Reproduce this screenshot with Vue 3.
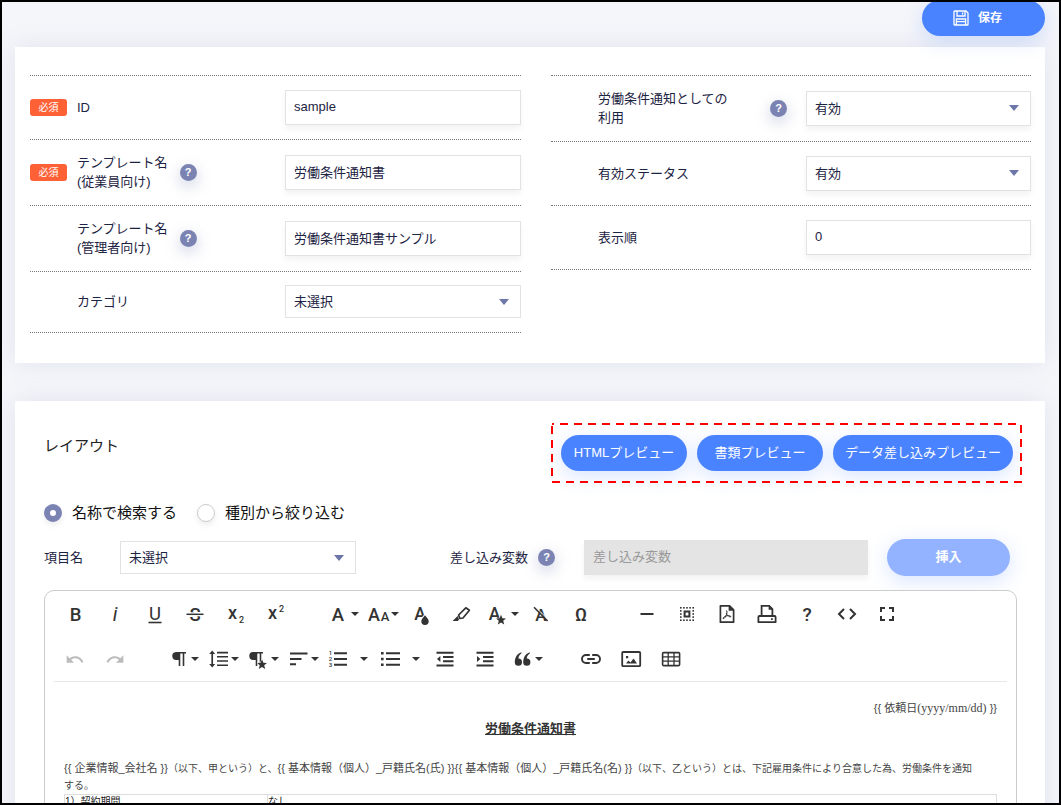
<script setup>
import { ref } from 'vue'

const templateId = ref('sample')
const employeeName = ref('労働条件通知書')
const adminName = ref('労働条件通知書サンプル')
const order = ref('0')
const searchMode = ref('name')

const letter = (ch, x, y, size, extra = '', weight = 500) =>
  `<text x="${x}" y="${y}" font-size="${size}" font-weight="${weight}" font-family="Roboto, sans-serif" text-anchor="middle" fill="currentColor" ${extra}>${ch}</text>`
const star = (x, y) =>
  `<path transform="translate(${x} ${y})" d="M0-5.2 1.4-1.7 5-1.5 2.2.8 3.2 4.4 0 2.4-3.2 4.4-2.2.8-5-1.5-1.4-1.7Z" fill="currentColor" stroke="#fff" stroke-width="1" paint-order="stroke"/>`
const line = (d, w = 2) => `<path d="${d}" fill="none" stroke="currentColor" stroke-width="${w}"/>`
const fill = (d) => `<path d="${d}" fill="currentColor"/>`
const pilcrow = (dx) =>
  `<path transform="translate(${dx} 0)" d="M9 5H19V6.6H17.3V19H15.7V6.6H13.3V19H11.7V13H9.6A4 4 0 0 1 9 5Z" fill="currentColor"/>`
const arc =
  'M12.5 8c-2.65 0-5.05.99-6.9 2.6L2 7v9h9l-3.62-3.62c1.39-1.16 3.16-1.88 5.12-1.88 3.54 0 6.55 2.31 7.6 5.5l2.37-.78C21.08 11.03 17.15 8 12.5 8z'

let dots = ''
for (let i = 0; i < 5; i++) {
  for (let j = 0; j < 5; j++) {
    if (i % 4 === 0 || j % 4 === 0) {
      dots += `<rect x="${5 + i * 3.1}" y="${5 + j * 3.1}" width="1.6" height="1.6" fill="currentColor"/>`
    }
  }
}

const rows = [
  [
    [
      { name: '太字', svg: letter('B', 12.5, 18.8, 18.5) },
      { name: '斜体', svg: letter('i', 12, 19, 20, 'font-style="italic"', 400) },
      { name: '下線', svg: letter('U', 12, 17.5, 18.5, '', 400) + line('M5.5 20.5H18.5', 1.6) },
      {
        name: '取り消し線',
        svg: letter('S', 12, 18.6, 18.5) + '<path d="M3 12.3H21" stroke="#fff" stroke-width="4"/>' + line('M3.5 12.3H20.5', 1.5),
      },
      { name: '下付き文字', svg: letter('x', 9.5, 17, 18) + letter('2', 18.5, 20.5, 9) },
      { name: '上付き文字', svg: letter('x', 9.5, 17, 18) + letter('2', 18.5, 10, 9) },
    ],
    [
      { name: 'フォント', caret: true, svg: letter('A', 11, 18.6, 18.5) },
      { name: 'フォントサイズ', caret: true, svg: letter('A', 7, 18.6, 18) + letter('A', 18, 18.6, 13) },
      {
        name: '文字色',
        svg:
          letter('A', 11, 17.6, 17.5) +
          '<path d="M16 13.2C18.5 16 19.7 17.5 19.7 19.2A3.7 3.7 0 0 1 12.3 19.2C12.3 17.5 13.5 16 16 13.2Z" fill="currentColor" stroke="#fff" stroke-width="2" paint-order="stroke"/>',
      },
      {
        name: '背景色',
        svg:
          '<path d="M9.6 13 16.8 5.8 20.4 8.2 14 16 10.8 16.4Z" fill="none" stroke="currentColor" stroke-width="1.7" stroke-linejoin="round"/>' +
          fill('M3.6 19 8.6 14 10 17.4 8.8 19Z'),
      },
      { name: '文字スタイル', caret: true, svg: letter('A', 7.5, 17.6, 17.5) + star(14, 18) },
      {
        name: '書式クリア',
        svg: letter('A', 12, 18.6, 17) + '<path d="M5.5 4 19 17.5" stroke="#fff" stroke-width="1"/>' + line('M5 5.2 18.6 19', 1.6),
      },
      { name: '特殊文字', svg: letter('Ω', 12, 18.6, 18) },
    ],
    [
      { name: '水平線', svg: line('M5.5 12H18.5', 2) },
      { name: 'すべて選択', svg: dots + line('M9.6 9.6H14.4V14.4H9.6Z', 2) },
      {
        name: 'PDF',
        svg:
          '<path d="M6.4 3.8H14.6L18.6 7.8V20.2H5.4V3.8Z" fill="none" stroke="currentColor" stroke-width="1.7" stroke-linejoin="round"/>' +
          fill('M13.6 3.2V8.8H19.2Z') +
          line('M11 8.6C12.6 8.6 12 11 11.4 12.6 10.6 14.6 9.4 17 8.2 16.6 7.4 16 9.6 14.2 12 13.8 14 13.4 16 13.8 15.8 14.8 15.2 15.6 12 13.8 11.2 11', 1),
      },
      {
        name: '印刷',
        svg:
          '<path d="M6.6 14V3.8H14.2L17.4 7V14" fill="none" stroke="currentColor" stroke-width="1.8"/>' +
          fill('M13.6 3V7.8H18.2Z') +
          '<path d="M3.4 20.2V15Q3.4 14 4.4 14H19.6Q20.6 14 20.6 15V20.2Z" fill="none" stroke="currentColor" stroke-width="1.8" stroke-linejoin="round"/>' +
          fill('M16 16.2H17.8V18H16Z'),
      },
      { name: 'ヘルプ', svg: letter('?', 12, 19, 19) },
      { name: 'コード表示', svg: line('M9 7 4 12 9 17M15 7 20 12 15 17', 2) },
      { name: '全画面', svg: line('M10 6H6V10M14 6H18V10M10 18H6V14M14 18H18V14', 2) },
    ],
  ],
  [
    [
      { name: '元に戻す', muted: true, svg: `<path transform="translate(2 2.6) scale(.82)" d="${arc}" fill="currentColor"/>` },
      { name: 'やり直す', muted: true, svg: `<path transform="translate(22 2.6) scale(-.82 .82)" d="${arc}" fill="currentColor"/>` },
    ],
    [
      { name: '段落書式', caret: true, svg: pilcrow(0) },
      {
        name: '行の高さ',
        caret: true,
        svg: line('M5.2 6V18', 1.7) + fill('M5.2 3.6 8.2 7H2.2ZM5.2 20.4 8.2 17H2.2Z') + line('M10 5.6H21M10 9.8H21M10 14H21M10 18.2H21', 1.6),
      },
      { name: '段落スタイル', caret: true, svg: pilcrow(-3) + star(15, 17.5) },
      { name: '配置', caret: true, svg: line('M3 6.5H20.5M3 12H14.5M3 17.3H9', 2) },
      {
        name: '番号付きリスト',
        split: true,
        svg: line('M8 6.2H21M8 12H21M8 17.8H21', 2) + letter('1', 4.5, 8.2, 6) + letter('2', 4.5, 13.8, 6) + letter('3', 4.5, 19.6, 6),
      },
      {
        name: '箇条書き',
        split: true,
        svg: line('M8 6.2H22M8 12H22M8 17.8H22', 2) + line('M3 6.2H5.6M3 12H5.6M3 17.8H5.6', 2.4),
      },
      { name: 'インデント減', svg: line('M3.5 5.8H20.5M10 10H20.5M10 14.2H20.5M3.5 18.4H20.5', 2) + fill('M4 12 7.4 9V15Z') },
      { name: 'インデント増', svg: line('M3.5 5.8H20.5M10 10H20.5M10 14.2H20.5M3.5 18.4H20.5', 2) + fill('M7.4 12 4 9V15Z') },
      {
        name: '引用',
        caret: true,
        svg: fill(
          'M10.4 5.2V6.6C8.4 7.8 7.4 9.6 7.4 11.6A3.6 3.6 0 1 1 3.8 15.2C3.8 10.6 6 6.6 10.4 5.2ZM18.8 5.2V6.6C16.8 7.8 15.8 9.6 15.8 11.6A3.6 3.6 0 1 1 12.2 15.2C12.2 10.6 14.4 6.6 18.8 5.2Z'
        ),
      },
    ],
    [
      {
        name: 'リンク',
        svg: '<path d="M10.8 8H7A4 4 0 0 0 7 16H10.8M13.2 8H17A4 4 0 0 1 17 16H13.2M8.2 12H15.8" fill="none" stroke="currentColor" stroke-width="1.9"/>',
      },
      {
        name: '画像',
        svg:
          '<rect x="3.2" y="5" width="18" height="14.2" rx="1" fill="none" stroke="currentColor" stroke-width="1.8"/>' +
          fill('M7 9H9.2V11.2H7ZM7 16.4 9.4 13.4 11.4 15.4 14.6 11.4 18 16.4Z'),
      },
      {
        name: '表',
        svg:
          '<rect x="3.6" y="5.6" width="17" height="13" rx="1" fill="none" stroke="currentColor" stroke-width="1.6"/>' +
          line('M3.6 9.8H20.6M3.6 14.2H20.6M9.2 5.6V18.6M15 5.6V18.6', 1.3),
      },
    ],
  ],
]
</script>

<template>
  <div class="frame">
    <header class="topbar">
      <button type="button" class="pill save">
        <svg viewBox="0 0 16 16" width="16" height="16" fill="none" stroke="currentColor" stroke-width="1.3">
          <path d="M1 1.6Q1 1 1.6 1H13L15 3V14.4Q15 15 14.4 15H1.6Q1 15 1 14.4Z" />
          <path d="M4 1V6H12V1M9.6 2.4V4.6M3.4 15V9H12.6V15M3.4 11.6H12.6" />
        </svg>
        <span>保存</span>
      </button>
    </header>

    <main>
      <section class="card settings">
        <div class="column">
          <div class="row">
            <span class="badge">必須</span>
            <div class="label-cell"><label for="tpl-id">ID</label></div>
            <input id="tpl-id" v-model="templateId" class="field" type="text" />
          </div>
          <div class="row">
            <span class="badge">必須</span>
            <div class="label-cell">
              <label for="tpl-emp">テンプレート名<br />(従業員向け)</label>
              <button type="button" class="help">?</button>
            </div>
            <input id="tpl-emp" v-model="employeeName" class="field" type="text" />
          </div>
          <div class="row">
            <div class="label-cell">
              <label for="tpl-admin">テンプレート名<br />(管理者向け)</label>
              <button type="button" class="help">?</button>
            </div>
            <input id="tpl-admin" v-model="adminName" class="field" type="text" />
          </div>
          <div class="row compact">
            <div class="label-cell"><label for="tpl-cat">カテゴリ</label></div>
            <div class="select flat">
              <select id="tpl-cat" class="field"><option>未選択</option></select>
              <svg viewBox="0 0 10 6" width="10" height="6"><path d="M0 0H10L5 6Z" /></svg>
            </div>
          </div>
        </div>

        <div class="column">
          <div class="row">
            <div class="label-cell spread">
              <label for="tpl-use">労働条件通知としての利用</label>
              <button type="button" class="help">?</button>
            </div>
            <div class="select">
              <select id="tpl-use" class="field"><option>有効</option></select>
              <svg viewBox="0 0 10 6" width="10" height="6"><path d="M0 0H10L5 6Z" /></svg>
            </div>
          </div>
          <div class="row">
            <div class="label-cell"><label for="tpl-status">有効ステータス</label></div>
            <div class="select">
              <select id="tpl-status" class="field"><option>有効</option></select>
              <svg viewBox="0 0 10 6" width="10" height="6"><path d="M0 0H10L5 6Z" /></svg>
            </div>
          </div>
          <div class="row">
            <div class="label-cell"><label for="tpl-order">表示順</label></div>
            <input id="tpl-order" v-model="order" class="field" type="text" />
          </div>
        </div>
      </section>

      <section class="card layout">
        <div class="layout-head">
          <h2>レイアウト</h2>
          <div class="previews">
            <button type="button" class="pill">HTMLプレビュー</button>
            <button type="button" class="pill">書類プレビュー</button>
            <button type="button" class="pill wide">データ差し込みプレビュー</button>
            <svg class="outline" aria-hidden="true"><rect x="1" y="1" /></svg>
          </div>
        </div>

        <div class="modes">
          <label><input v-model="searchMode" type="radio" name="mode" value="name" />名称で検索する</label>
          <label><input v-model="searchMode" type="radio" name="mode" value="kind" />種別から絞り込む</label>
        </div>

        <div class="insert">
          <label class="item-label" for="item">項目名</label>
          <div class="select flat item-select">
            <select id="item" class="field"><option>未選択</option></select>
            <svg viewBox="0 0 10 6" width="10" height="6"><path d="M0 0H10L5 6Z" /></svg>
          </div>
          <div class="var-label">
            <label for="variable">差し込み変数</label>
            <button type="button" class="help">?</button>
          </div>
          <input id="variable" class="field variable" type="text" placeholder="差し込み変数" disabled />
          <button type="button" class="pill insert-button" disabled>挿入</button>
        </div>

        <div class="editor">
          <div class="toolbar">
            <div v-for="(groups, r) in rows" :key="r" class="tools">
              <div v-for="(group, g) in groups" :key="g" class="group">
                <button
                  v-for="tool in group"
                  :key="tool.name"
                  type="button"
                  class="tool"
                  :class="{ dropdown: tool.caret, split: tool.split, muted: tool.muted }"
                  :aria-label="tool.name"
                >
                  <svg viewBox="0 0 24 24" width="24" height="24" v-html="tool.svg"></svg>
                  <svg v-if="tool.caret || tool.split" class="caret" viewBox="0 0 8 4" width="8" height="4">
                    <path d="M0 0H8L4 4Z" fill="currentColor" />
                  </svg>
                </button>
              </div>
            </div>
          </div>
          <div v-pre class="document">
            <p class="date">{{ 依頼日<span>(yyyy/mm/dd)</span> }}</p>
            <h3>労働条件通知書</h3>
            <p class="intro"><span class="tag">{{ 企業情報_会社名 }}</span>（以下、甲という）と、<span class="tag">{{ 基本情報（個人）_戸籍氏名(氏) }}</span><span class="tag">{{ 基本情報（個人）_戸籍氏名(名) }}</span>（以下、乙という）とは、下記雇用条件により合意した為、労働条件を通知<br />する。</p>
            <table>
              <tbody>
                <tr>
                  <td class="term">1）契約期間</td>
                  <td>なし</td>
                </tr>
              </tbody>
            </table>
          </div>
        </div>
      </section>
    </main>
  </div>
</template>

<style>
body {
  margin: 0;
}
</style>

<style scoped>
.frame,
.frame * {
  box-sizing: border-box;
}

.frame {
  height: 100vh;
  overflow: hidden;
  border: 2px solid #000;
  padding: 0 14px 0 13px;
  background: #f5f6fa;
  color: #1d2342;
  font: 13px/19px 'Liberation Sans', 'Noto Sans CJK JP', sans-serif;
}

button,
input,
select {
  margin: 0;
  font: inherit;
  color: inherit;
}

button {
  border: 0;
  padding: 0;
  background: none;
}

.topbar {
  display: flex;
  justify-content: flex-end;
  position: relative;
  z-index: 1;
  margin-top: -2px;
  padding-bottom: 11px;
}

.pill {
  display: flex;
  align-items: center;
  justify-content: center;
  height: 36px;
  min-width: 126px;
  padding-bottom: 2px;
  border-radius: 18px;
  background: #4a83ff;
  color: #fff;
  white-space: nowrap;
  box-shadow: 0 5px 20px rgba(74, 131, 255, 0.22);
}

.pill.save {
  min-width: 123px;
  gap: 9px;
  padding: 0 12px 0 0;
  font-size: 12px;
  font-weight: 700;
}

.pill.wide {
  min-width: 180px;
}

.card {
  background: #fff;
  box-shadow: 0 0 25px rgba(90, 105, 160, 0.13);
}

.settings {
  display: grid;
  grid-template-columns: 491fr 480fr;
  align-items: start;
  gap: 30px;
  padding: 28px 14px 30px 15px;
}

.column {
  border-top: 1px dotted #777;
}

.row {
  display: grid;
  grid-template-columns: 47px 208px 1fr;
  align-items: center;
  min-height: 64px;
  padding: 13px 0 14px;
  border-bottom: 1px dotted #777;
}

.row.compact {
  min-height: 61px;
}

.badge {
  width: 37px;
  border-radius: 3px;
  background: #ff6136;
  color: #fff;
  font-size: 10px;
  line-height: 17px;
  text-align: center;
}

.label-cell {
  grid-column: 2;
  display: flex;
  align-items: center;
  gap: 12px;
}

.label-cell.spread {
  justify-content: space-between;
  padding-right: 19px;
}

.label-cell.spread label {
  max-width: 140px;
}

.help {
  flex: none;
  width: 17px;
  height: 17px;
  border-radius: 50%;
  background: #7b83b3;
  color: #fff;
  font-size: 11px;
  font-weight: 700;
  line-height: 17px;
  text-align: center;
  box-shadow: 0 5px 15px rgba(123, 131, 179, 0.4);
}

.field {
  width: 100%;
  min-width: 0;
  height: 35px;
  padding: 0 8px;
  border: 1px solid #e2e2e2;
  border-radius: 0;
  background: #fff;
  box-shadow: 0 4px 6px rgba(0, 0, 0, 0.05);
  appearance: none;
}

input.field {
  padding-bottom: 2px;
}

.select {
  display: grid;
  align-items: center;
}

.select > * {
  grid-area: 1 / 1;
}

.select svg {
  justify-self: end;
  margin-right: 12px;
  fill: #6c76a8;
  pointer-events: none;
}

.flat .field {
  height: 33px;
  box-shadow: none;
}

.layout {
  margin-top: 38px;
  padding: 22px 28px 0 29px;
}

.layout-head {
  display: flex;
  align-items: flex-start;
  justify-content: space-between;
  margin-right: -5px;
}

h2 {
  margin: 11px 0 0;
  color: #222;
  font-size: 15px;
  font-weight: 400;
  line-height: 24px;
}

.previews {
  position: relative;
  display: flex;
  gap: 10px;
  padding: 12px 9px 12px 10px;
}

.outline {
  position: absolute;
  inset: 0;
  width: 100%;
  height: 100%;
  pointer-events: none;
}

.outline rect {
  width: calc(100% - 2px);
  height: calc(100% - 2px);
  fill: none;
  stroke: #f00;
  stroke-width: 2;
  stroke-dasharray: 8 6;
  stroke-dashoffset: 6;
}

.modes {
  display: flex;
  gap: 20px;
  margin-top: 18px;
  color: #111;
  font-size: 15px;
  line-height: 24px;
}

.modes label {
  display: flex;
  align-items: center;
  gap: 10px;
}

.modes input {
  width: 18px;
  height: 18px;
  border: 1px solid #ccc;
  border-radius: 50%;
  background: #fff;
  box-shadow: 0 3px 6px rgba(0, 0, 0, 0.08);
  appearance: none;
}

.modes input:checked {
  border: 6px solid #7b83b3;
}

.insert {
  display: flex;
  align-items: center;
  margin: 14px 7px 0 0;
}

.item-label {
  width: 76px;
  flex: none;
}

.item-select {
  flex: 1 1 236px;
}

.var-label {
  display: flex;
  align-items: center;
  gap: 10px;
  flex: none;
  width: 134px;
  margin-left: 94px;
}

.variable {
  flex: 1 1 284px;
  border-color: #e4e4e4;
  background: #e4e4e4;
}

.variable::placeholder {
  color: #999;
}

.insert-button {
  flex: none;
  min-width: 123px;
  height: 37px;
  margin-left: 19px;
  border-radius: 19px;
  background: #93b2ff;
  font-weight: 700;
}

.editor {
  position: relative;
  margin-top: 14px;
  padding: 0 9px 40px;
  border: 1px solid #ccc;
  border-radius: 10px;
  background: #fff;
}

.toolbar {
  border-bottom: 1px solid #e8e8e8;
  color: #333;
}

.tools {
  display: flex;
  gap: 26px;
  padding-left: 1px;
  height: 45px;
  align-items: center;
}

.group {
  display: flex;
}

.tool {
  display: flex;
  align-items: center;
  justify-content: center;
  width: 40px;
  height: 40px;
}

.tool svg {
  flex: none;
  overflow: visible;
}

.tool.dropdown {
  padding-left: 4px;
}

.tool.split {
  width: 52px;
  gap: 10px;
}

.tool.muted {
  color: #bbb;
}

.document {
  padding: 18px 10px 0;
  color: #444;
  font-size: 10px;
  line-height: 17px;
}

.document p {
  margin: 0;
}

.date,
.tag {
  font-size: 11px;
}

.date {
  text-align: right;
}

.date span {
  font-family: 'Liberation Serif', serif;
  font-size: 12px;
}

h3 {
  margin: 2px 0 22px;
  color: #333;
  font-size: 13px;
  font-weight: 700;
  line-height: 19px;
  text-align: center;
  text-decoration: underline;
}

.intro {
  white-space: nowrap;
}

table {
  width: 100%;
  border-collapse: collapse;
  line-height: 14px;
}

td {
  padding: 0;
  border: 1px solid #ddd;
  color: #222;
}

.term {
  width: 203px;
}
</style>
